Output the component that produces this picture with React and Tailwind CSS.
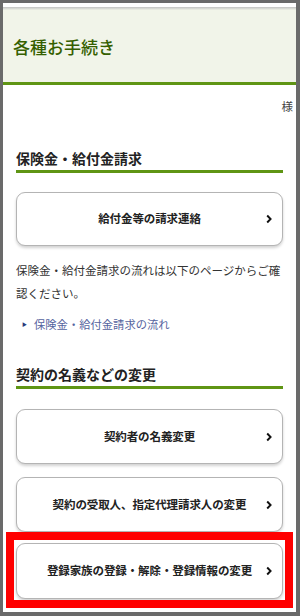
import React from "react";

const jp = { fontFamily: '"Noto Sans CJK JP", "Noto Sans", sans-serif' };

function Chevron() {
  return (
    <svg width="6" height="9" viewBox="0 0 6 9" className="shrink-0">
      <polyline points="1.2,1 4.6,4.5 1.2,8" fill="none" stroke="#111" strokeWidth="1.9" />
    </svg>
  );
}

function Btn({ children, h = "h-[55px]", className = "" }) {
  return (
    <div
      className={`relative ${h} ${className} rounded-[9px] border border-[#b4b4b4] bg-white shadow-[0_2px_3px_rgba(0,0,0,0.18)] flex items-center justify-center`}
    >
      <span className="text-[11.5px] font-bold text-[#222] tracking-[-0.1px]">{children}</span>
      <span className="absolute right-[10px] top-1/2 -translate-y-1/2 flex">
        <Chevron />
      </span>
    </div>
  );
}

export default function App() {
  return (
    <div
      style={jp}
      className="w-[300px] h-[616px] bg-[#6a6a6a] pt-[3px] pl-[3px] pr-[4px] pb-[4px] overflow-hidden"
    >
      <div className="bg-white h-full overflow-hidden flex flex-col">
        <div className="h-[4px] bg-white shrink-0" />
        <div className="h-[3px] bg-gradient-to-b from-[#c2c2c2] to-[#eef1e5] shrink-0" />
        <div className="h-[72px] bg-[#f1f4e9] flex items-center pl-[10px] border-b-[3px] border-[#5f9514] box-content shrink-0">
          <h1 className="text-[17px] leading-none font-medium text-[#355f00] tracking-[0px]">各種お手続き</h1>
        </div>
        <div className="mt-[15px] h-[13px] leading-[13px] text-right pr-[3px] text-[11.5px] text-[#444] shrink-0">
          様
        </div>
        <div className="px-[13px] flex flex-col">
          <h2 className="mt-[35px] text-[14px] leading-[20px] font-bold text-[#222] pb-[2px] border-b-[3px] border-[#5f9514]">
            保険金・給付金請求
          </h2>
          <Btn h="h-[54px]" className="mt-[19px]">給付金等の請求連絡</Btn>
          <p className="mt-[13px] text-[11.5px] leading-[23px] text-[#333]">
            保険金・給付金請求の流れは以下のページからご確認ください。
          </p>
          <div className="mt-[9px] h-[20px] flex items-center text-[11.3px] text-[#55639e]">
            <span className="ml-[6px] mr-[7px] text-[5px] text-[#2b3a7a]">▶</span>
            <span>保険金・給付金請求の流れ</span>
          </div>
          <h2 className="mt-[30px] text-[14px] leading-[20px] font-bold text-[#222] pb-[2px] border-b-[3px] border-[#5f9514]">
            契約の名義などの変更
          </h2>
          <Btn className="mt-[20px]">契約者の名義変更</Btn>
          <Btn className="mt-[13px]">契約の受取人、指定代理請求人の変更</Btn>
          <div className="relative mt-[11px]">
            <Btn h="h-[56px]">登録家族の登録・解除・登録情報の変更</Btn>
            <div className="absolute -left-[10px] -right-[10px] -top-[11px] -bottom-[9px] border-[8px] border-[#ff0000] pointer-events-none" />
          </div>
        </div>
      </div>
    </div>
  );
}
